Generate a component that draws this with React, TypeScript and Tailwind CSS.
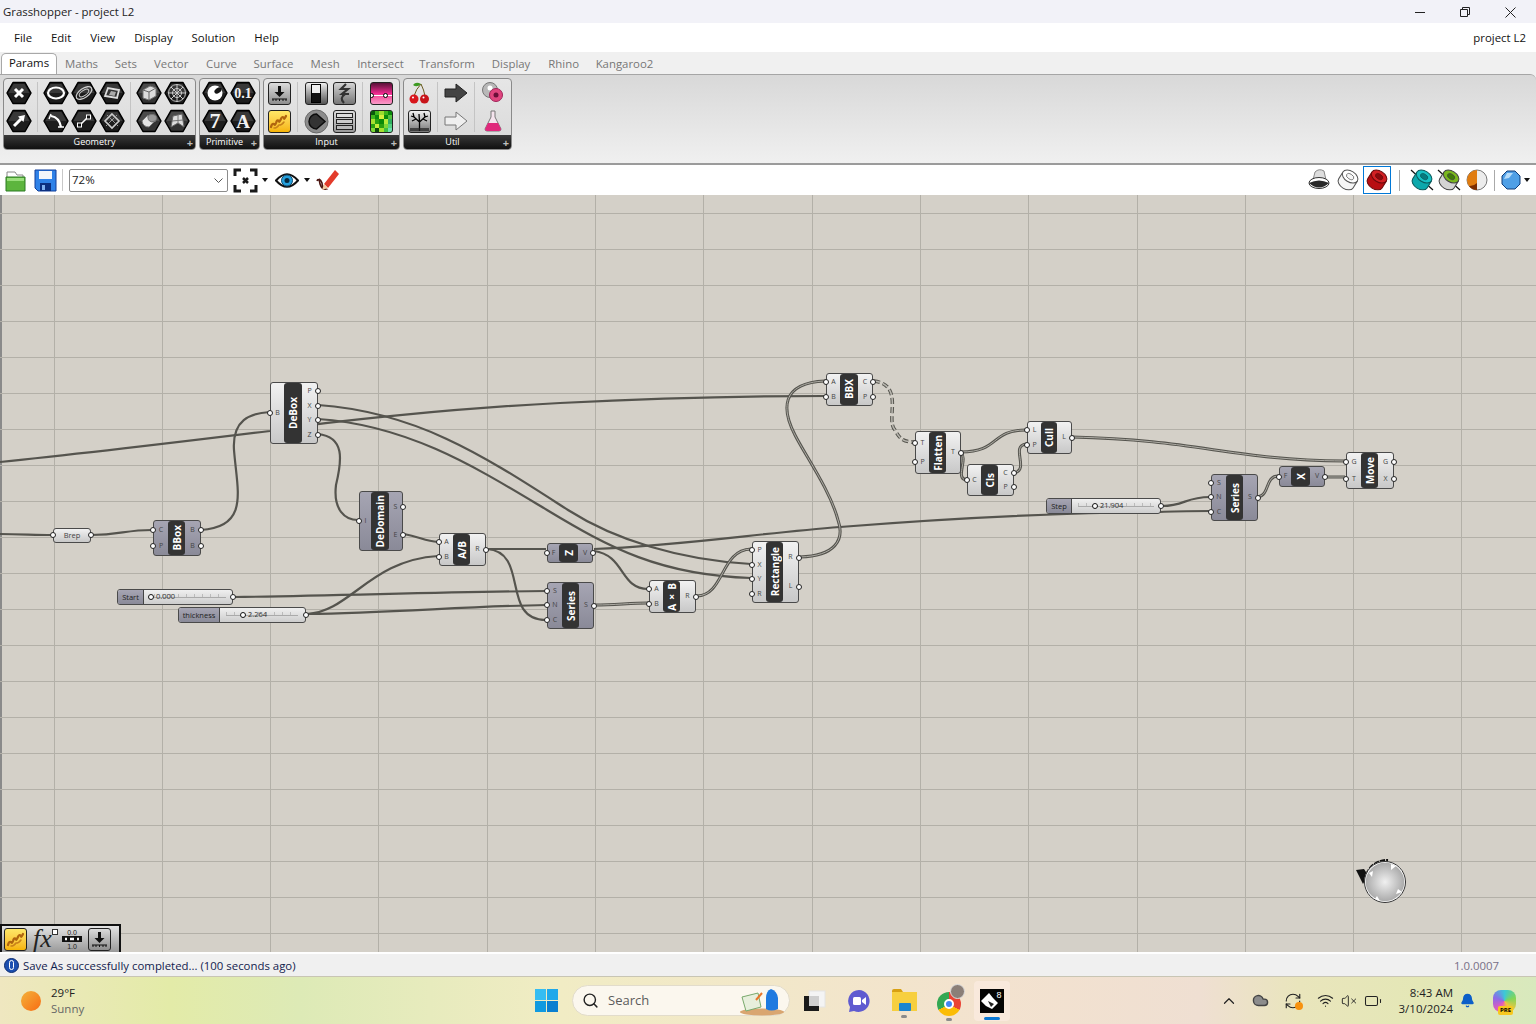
import React from 'react'
import { Battery, Bell, ChevronUp, Cloud, RefreshCw, Search, VolumeX, Wifi } from 'lucide-react'

const ui = "font-['Open_Sans','Noto_Sans',sans-serif]"

/* ---------- ribbon icons ---------- */
const Hex = ({ children, light }: { children?: React.ReactNode; light?: boolean }) => (
  <svg width="28" height="28" viewBox="0 0 28 28">
    <polygon points="2,14 8,3.5 20,3.5 26,14 20,24.5 8,24.5" fill={light ? '#333' : '#1d1d1d'} stroke="#000" strokeLinejoin="round" strokeWidth="1.5" />
    <polygon points="3.5,14 8.6,5 19.4,5 24.5,14" fill="#fff" opacity="0.12" />
    {children}
  </svg>
)

const Sq = ({ children, cls }: { children?: React.ReactNode; cls: string }) => (
  <div className={`w-[23px] h-[23px] rounded-[3px] border border-[#222] overflow-hidden flex items-center justify-center ${cls}`}>
    {children}
  </div>
)

const white = { stroke: '#fff', fill: 'none' }

const geometryIcons = [
  [
    <Hex><path d="M10 10 L18 18 M18 10 L10 18" {...white} strokeWidth="3" /></Hex>,
    <Hex><path d="M9 19 L16 12" {...white} strokeWidth="3" /><polygon points="20,8 13,9.5 18.5,15" fill="#fff" /></Hex>,
  ],
  [
    <Hex><ellipse cx="14" cy="14" rx="8" ry="5.5" {...white} strokeWidth="2.2" /></Hex>,
    <Hex><path d="M9 9 C15 10 18 14 19 20" {...white} strokeWidth="2.2" /><path d="M7 12 L9 7 M16 20h6" stroke="#fff" strokeWidth="1.4" /></Hex>,
  ],
  [
    <Hex><ellipse cx="14" cy="14" rx="9" ry="4.5" transform="rotate(-35 14 14)" fill="none" stroke="#ccc" strokeWidth="1.3" /><ellipse cx="14" cy="14" rx="5.500" ry="2.500" transform="rotate(-35 14 14)" fill="none" stroke="#ccc" /></Hex>,
    <Hex><path d="M10 18 L18 10" stroke="#fff" strokeWidth="1.6" /><rect x="7.5" y="16" width="4" height="4" fill="#111" stroke="#fff" /><rect x="16.5" y="8" width="4" height="4" fill="#111" stroke="#fff" /></Hex>,
  ],
  [
    <Hex><polygon points="7,17 10,9 21,11 19,19" fill="#333" stroke="#ddd" strokeWidth="1.8" /><polygon points="11,16 13,12 18,13 16.500,17" fill="#aaa" /></Hex>,
    <Hex><polygon points="14,7 21,14 14,21 7,14" fill="none" stroke="#ccc" strokeWidth="1.6" /><path d="M9 8 L20 19 M19 8 L8 19" stroke="#999" /></Hex>,
  ],
  [
    <Hex light><polygon points="8,11 15,7 21,9 21,17 14,21 8,19" fill="#dcdcdc" stroke="#777" /><path d="M8 11 L14 13 L14 21 M14 13 L21 9" stroke="#666" fill="none" /></Hex>,
    <Hex light><ellipse cx="17" cy="11" rx="4.500" ry="3.500" fill="#999" stroke="#777" /><path d="M13 8 L7 14 Q8 20 14 20 L21 13 Q21 15 17 15 Q12 14 13 8z" fill="#e4e4e4" stroke="#777" /></Hex>,
  ],
  [
    <Hex><circle cx="14" cy="14" r="8.500" fill="none" stroke="#bbb" /><path d="M14 5v18M5 14h18M8 8l12 12M20 8L8 20" stroke="#ccc" /><circle cx="14" cy="14" r="4.500" fill="none" stroke="#ccc" /></Hex>,
    <Hex light><polygon points="8,20 10,9 19,7 21,20 15,16" fill="#ddd" stroke="#666" /><path d="M15 8 L15 16 M9 14 L20 13" stroke="#777" /></Hex>,
  ],
]

const txt = (t: string, size: number, y = 19) => (
  <text x="14" y={y} textAnchor="middle" fontSize={size} fontWeight="700" fill="#f2f2f2" fontFamily="Liberation Serif, serif">{t}</text>
)

const primitiveIcons = [
  [
    <Hex><circle cx="14" cy="14" r="7.500" fill="#fff" /><ellipse cx="17" cy="11.500" rx="4" ry="2.500" transform="rotate(-35 17 11.500)" fill="#151515" /></Hex>,
    <Hex>{txt('7', 22, 21)}</Hex>,
  ],
  [<Hex>{txt('0.1', 14, 19)}</Hex>, <Hex>{txt('A', 19, 20.500)}</Hex>],
]

const Download = () => (
  <svg width="17" height="17" viewBox="0 0 17 17">
    <path d="M8.500 1v7" stroke="#111" strokeWidth="3" />
    <polygon points="3.500,7 13.500,7 8.500,12" fill="#111" />
    <path d="M1 14h15M2 14v2M5 14v2M8.500 14v2M12 14v2M15 14v2" stroke="#111" />
  </svg>
)

const Wave = () => (
  <svg width="20" height="20" viewBox="0 0 20 20">
    <path d="M2 16 Q3 12 5 13 Q6 15 7 12 Q8 8 10 10 Q10 12 12 8 Q13 5 15 7 Q15 9 17 5" fill="none" stroke="#b0650f" strokeWidth="2.300" strokeLinecap="round" />
    <path d="M5 17 Q8 17 10 14 Q13 14 15 11" fill="none" stroke="#c9821a" strokeWidth="1.500" strokeLinecap="round" />
  </svg>
)

const checkerRows = [
  ['#0a5c0a', '#3fb51c', '#9ddc2e', '#3fb51c', '#0a8a0a'],
  ['#3fb51c', '#0a8a0a', '#d4ee3c', '#0a8a0a', '#55c040'],
  ['#a6e030', '#2aa010', '#0a8a0a', '#b6ec3c', '#30b060'],
  ['#2aa010', '#c6ec3c', '#2aa010', '#7ed838', '#55d080'],
  ['#7ed838', '#0a4a0a', '#a6e030', '#3ec040', '#70e0b0'],
]

const Checker = () => (
  <svg width="23" height="23" viewBox="0 0 5 5" shapeRendering="crispEdges">
    {checkerRows.map((row, y) => row.map((c, x) => <rect key={`${x}-${y}`} x={x} y={y} width="1" height="1" fill={c} />))}
  </svg>
)

const inputIcons = [
  [
    <Sq cls="bg-linear-to-b from-[#dcdcdc] to-[#8e8e8e]"><Download /></Sq>,
    <Sq cls="bg-linear-to-b from-[#ffe766] to-[#f6b400] border-[#8a7a30]"><Wave /></Sq>,
  ],
  [
    <Sq cls="bg-linear-to-b from-[#f0f0f0] to-[#555]"><div className="w-[10px] h-[19px] border border-black bg-linear-to-b from-[#eee] from-45% to-[#111] to-45%" /></Sq>,
    <svg width="25" height="25" viewBox="0 0 25 25">
      <circle cx="12.500" cy="12.500" r="11.500" fill="#8c8c8c" stroke="#6a6a6a" />
      <path d="M12.500 5 A7.500 7.500 0 1 0 12.500 20 L21 12.500z" fill="#333" stroke="#0c0c0c" strokeWidth="1.500" />
    </svg>,
  ],
  [
    <Sq cls="bg-linear-to-b from-[#d4d4d4] to-[#777]">
      <svg width="17" height="21" viewBox="0 0 17 21"><path d="M10 1 L5 6 L12 6 L6 11 L13 11 M9 11 Q3 15 8 20" fill="none" stroke="#333" strokeWidth="2.200" /></svg>
    </Sq>,
    <Sq cls="bg-linear-to-b from-[#ddd] to-[#999] flex-col gap-[1px]">
      <div className="w-[17px] h-[5px] bg-[#ddd] border border-[#222]" />
      <div className="w-[17px] h-[5px] bg-[#ccc] border border-[#222]" />
      <div className="w-[17px] h-[5px] bg-[#bbb] border border-[#222]" />
    </Sq>,
  ],
  [
    <Sq cls="bg-linear-to-b from-[#5a1038] via-[#f02a90] to-[#f99ac8] relative">
      <div className="absolute left-0 right-0 top-[12px] h-px bg-white" />
      <span className="absolute left-[-2px] top-[10px] w-[5px] h-[5px] rounded-full bg-white border border-black" />
      <span className="absolute right-[4px] top-[10px] w-[5px] h-[5px] rounded-full bg-white border border-black" />
    </Sq>,
    <Sq cls="bg-[#0a8a0a]"><Checker /></Sq>,
  ],
]

const utilIcons = [
  [
    <svg width="22" height="24" viewBox="0 0 22 24">
      <path d="M6 15 Q8 8 13 3 Q16 9 17 15" fill="none" stroke="#6a5a20" />
      <path d="M13 3 Q8 0 5 4 Q9 7 13 3" fill="#3e9a22" />
      <circle cx="6" cy="18" r="4.500" fill="#d8161c" />
      <circle cx="16.500" cy="18" r="4.500" fill="#c8141a" />
      <circle cx="5" cy="16.500" r="1" fill="#fff" />
      <circle cx="15.500" cy="16.500" r="1" fill="#fff" />
    </svg>,
    <Sq cls="bg-linear-to-b from-[#f2f2f2] to-[#777]">
      <svg width="21" height="21" viewBox="0 0 21 21">
        <path d="M10.500 20 L10.500 11 M10.500 11 L5 6 M10.500 11 L16 6 M5 6 L2 5 M5 6 L4 2 M16 6 L19 5 M16 6 L15 2 M10.500 11 L10 3 M3 10 L7 8 M18 10 L14 8" stroke="#000" strokeWidth="1.300" fill="none" />
        <rect x="1" y="17" width="19" height="3" fill="#222" opacity="0.7" />
      </svg>
    </Sq>,
  ],
  [
    <svg width="24" height="20" viewBox="0 0 24 20"><polygon points="1,6 12,6 12,1 23,10 12,19 12,14 1,14" fill="#444" stroke="#222" /></svg>,
    <svg width="24" height="20" viewBox="0 0 24 20"><polygon points="1,6 12,6 12,1 23,10 12,19 12,14 1,14" fill="#efefef" stroke="#777" /></svg>,
  ],
  [
    <svg width="24" height="24" viewBox="0 0 24 24">
      <circle cx="9" cy="9" r="7.500" fill="#b8b8b8" stroke="#777" />
      <circle cx="9" cy="7" r="2.500" fill="#fff" />
      <circle cx="15" cy="14" r="6.500" fill="#e0457e" stroke="#a02458" />
      <circle cx="15" cy="14" r="2.500" fill="#6a0f38" />
    </svg>,
    <svg width="20" height="24" viewBox="0 0 20 24">
      <path d="M8 2h4v6l6 12q0 2-2 2H4q-2 0-2-2l6-12z" fill="#f5e4ee" stroke="#777" />
      <path d="M5 14h10l3 6q0 2-2 2H4q-2 0-2-2z" fill="#e0287c" />
    </svg>,
  ],
]

const Group = ({ label, sections, cls }: { label: string; sections: React.ReactNode[][][]; cls: string }) => (
  <div className={`h-[72px] flex flex-col rounded-[4px] border border-[#8a8a8a] overflow-hidden bg-linear-to-b from-[#e6e6e6] to-[#d9d9d9] ${cls}`}>
    <div className="flex-1 flex px-[1px]">
      {sections.map((cols, s) => (
        <React.Fragment key={s}>
          {s > 0 && <div className="w-[1px] mx-[4px] my-[3px] bg-[#c4c4c4]" />}
          {cols.map((col, c) => (
            <div key={c} className="w-[28px] flex flex-col">
              {col.map((ic, r) => (
                <div key={r} className="h-[28px] flex items-center justify-center">{ic}</div>
              ))}
            </div>
          ))}
        </React.Fragment>
      ))}
    </div>
    <div className={`relative h-[14px] pr-[10px] bg-linear-to-b from-[#3a3a3a] to-[#111] text-white text-[9px] leading-[13px] text-center ${ui}`}>
      {label}
      <span className="absolute right-[2px] top-[1px] text-[#bdbdbd] text-[11px] leading-[13px] font-bold">+</span>
    </div>
  </div>
)

/* ---------- canvas ---------- */
type NodeProps = {
  pos: string
  title: string
  kind?: 'light' | 'gray'
  left: string[]
  right: string[]
  leftW?: string
  midW?: string
}

const Ports = ({ items, side, cls }: { items: string[]; side: 'l' | 'r'; cls: string }) => (
  <div className={`flex flex-col py-[1px] ${cls}`}>
    {items.map((t, i) => (
      <div key={i} className="relative flex-1 flex items-center justify-center text-[7px] text-[#444]">
        {t}
        <span className={`absolute w-[6px] h-[6px] rounded-full bg-white border-[1.5px] border-[#222] ${side === 'l' ? 'left-[-4px]' : 'right-[-4px]'} top-1/2 -translate-y-1/2`} />
      </div>
    ))}
  </div>
)

const Node = ({ pos, title, kind = 'light', left, right, leftW = 'w-[13px]', midW = 'w-[18px]' }: NodeProps) => (
  <div className={`absolute flex rounded-[3px] border border-[#4a4a4a] ${kind === 'light' ? 'bg-linear-to-b from-[#f2f2f2] to-[#c8c8c8]' : 'bg-linear-to-b from-[#a6a5b3] to-[#8a8a98]'} ${pos} ${ui}`}>
    <Ports items={left} side="l" cls={leftW} />
    <div className={`${midW} rounded-[3px] bg-[#333333] flex items-center justify-center overflow-hidden`}>
      <span className="[writing-mode:vertical-rl] rotate-180 text-white text-[10px] font-bold leading-none whitespace-nowrap">{title}</span>
    </div>
    <Ports items={right} side="r" cls="flex-1" />
  </div>
)

const Slider = ({ pos, label, labelW, value, knob, tick }: { pos: string; label: string; labelW: string; value: string; knob: string; tick: string }) => (
  <div className={`absolute flex rounded-[3px] border border-[#4a4a4a] bg-linear-to-b from-[#f0f0f0] to-[#cdcdcd] ${pos} ${ui}`}>
    <div className={`${labelW} bg-linear-to-b from-[#a6a5b3] to-[#8a8a98] border-r border-[#444] rounded-l-[2px] text-[7.500px] leading-[14px] text-center text-[#222]`}>{label}</div>
    <div className="relative flex-1">
      <div className={`absolute top-[4px] h-[4px] border-b border-[#aaa] bg-[repeating-linear-gradient(90deg,#bbb_0px,#bbb_1px,transparent_1px,transparent_8px)] ${tick}`} />
      <div className={`absolute top-[1px] flex items-center gap-[2px] ${knob}`}>
        <span className="w-[6px] h-[6px] rounded-full bg-white border-[1.5px] border-[#111]" />
        <span className="text-[7.500px] leading-[11px] text-[#333]">{value}</span>
      </div>
      <span className="absolute right-[-4px] top-1/2 -translate-y-1/2 w-[6px] h-[6px] rounded-full bg-white border-[1.5px] border-[#222]" />
    </div>
  </div>
)

const single = [
  'M0 462 C90 453 180 442 270 431 C330 421 460 408 560 403 C660 398 740 396 826 396',
  'M0 534 C20 534 35 535 52 535',
  'M91 535 C120 535 125 530 152 530',
  'M201 530 C250 527 237 490 234 450 C232 420 250 413 270 412',
  'M318 434 C345 437 342 460 336 485 C333 510 345 520 358 520',
  'M318 405 C420 412 490 460 568 510 C615 540 680 560 751 564',
  'M318 419 C410 425 480 470 547 510 C610 548 660 575 751 578',
  'M404 534 C420 537 425 541 438 542',
  'M307 614 C350 612 370 560 438 556',
  'M487 549 C510 549 530 549 546 549',
  'M487 549 C530 552 500 620 546 620',
  'M234 597 C330 596 440 592 546 591',
  'M307 614 C390 613 470 606 546 605',
  'M594 551 C625 555 620 589 648 589',
  'M594 549 C680 546 760 533 840 527 C950 518 1050 513 1160 512 C1175 511 1195 511 1210 511',
  'M1162 506 C1185 506 1185 497 1210 497',
]

const double = [
  'M595 605 C615 605 630 603 648 603',
  'M697 596 C725 595 720 550 751 549',
  'M800 557 C835 556 845 540 838 520 C830 490 805 455 795 435 C782 410 780 383 825 381',
  'M961 452 C1000 452 990 430 1026 430',
  'M961 452 C968 460 955 478 966 480',
  'M1014 473 C1030 470 1010 446 1026 444',
  'M1072 437 C1200 440 1230 460 1345 461',
  'M1258 497 C1270 495 1265 476 1278 476',
  'M1325 477 L1345 477',
]

const CanvasDrawing = () => {
  const vx = Array.from({ length: 14 }).map((_, i) => Math.round(53.5 + i * 108.3) + 0.5)
  const hy = Array.from({ length: 21 }).map((_, i) => 213.5 + i * 36)
  return (
    <svg className="absolute inset-0 w-full h-full" viewBox="0 195 1536 757">
      {vx.map((x) => <path key={x} d={`M${x} 195V952`} stroke="#b3b0a8" />)}
      {hy.map((y) => <path key={y} d={`M0 ${y}H1536`} stroke="#b3b0a8" />)}
      {single.map((d, i) => <path key={i} d={d} fill="none" stroke="#55544e" strokeWidth="2.200" />)}
      {double.map((d, i) => (
        <g key={i}>
          <path d={d} fill="none" stroke="#55544e" strokeWidth="3" />
          <path d={d} fill="none" stroke="#aeaca5" strokeWidth="1" />
        </g>
      ))}
      <path d="M874 381 C905 385 885 420 895 430 C900 440 905 442 914 442" fill="none" stroke="#55544e" strokeWidth="3.500" strokeDasharray="6 3" />
      <path d="M874 381 C905 385 885 420 895 430 C900 440 905 442 914 442" fill="none" stroke="#b9b7b0" strokeWidth="1.500" strokeDasharray="6 3" />
    </svg>
  )
}

const Radial = () => (
  <svg className="absolute left-[1352px] top-[661px]" width="58" height="50" viewBox="1352 856 58 50">
    <defs>
      <radialGradient id="rad">
        <stop offset="0" stopColor="#f0f0f0" />
        <stop offset="1" stopColor="#a8a8a8" />
      </radialGradient>
    </defs>
    <polygon points="1356,870 1364,869 1368,875 1363,884" fill="#111" />
    <path d="M1366 880 A21 21 0 0 1 1388 861" fill="none" stroke="#111" strokeWidth="4" strokeDasharray="5 1" />
    <circle cx="1385" cy="882" r="20" fill="url(#rad)" stroke="#fff" strokeWidth="1.500" />
    <circle cx="1385" cy="882" r="20.500" fill="none" stroke="#333" />
    <polygon points="1369,873 1373,871 1372,877" fill="#fff" />
    <polygon points="1391,864 1396,866 1391,870" fill="#fff" />
    <polygon points="1398,889 1402,892 1396,894" fill="#fff" />
    <polygon points="1377,896 1380,901 1375,899" fill="#fff" />
  </svg>
)

/* ---------- toolbar icons ---------- */
const Tube = ({ body, top, hole, ring = '#222', size = 24, slash }: { body: string; top: string; hole?: string; ring?: string; size?: number; slash?: boolean }) => (
  <svg width={size} height={size} viewBox="0 0 24 24">
    {slash && <path d="M1 2 L23 22" stroke="#111" strokeWidth="1.200" />}
    <g transform="rotate(32 12 12)">
      <path d="M3.500 8 V16 A8.500 5.500 0 0 0 20.500 16 V8" fill={body} stroke={ring} />
      <ellipse cx="12" cy="8" rx="8.500" ry="5.500" fill={top} stroke={ring} />
      <ellipse cx="12" cy="8" rx="4" ry="2.500" fill={hole ?? body} stroke={ring} strokeWidth="0.700" />
    </g>
  </svg>
)

const Toolbar = () => (
  <div className="h-[32px] flex items-center bg-white border-t-2 border-[#9b9b9b] pl-[5px]">
    <svg width="21" height="23" viewBox="0 0 21 23">
      <path d="M2 3h8l2 3h6v3H2z" fill="#fff" stroke="#888" />
      <path d="M1 8h19v14H1z" fill="#5db53e" stroke="#2d7a22" />
      <path d="M2 9h17v3H2z" fill="#9adf7c" />
    </svg>
    <svg className="ml-[8px]" width="23" height="23" viewBox="0 0 23 23">
      <path d="M1 1h21v21H4l-3-3z" fill="#2f82e8" stroke="#123f9a" />
      <rect x="5" y="2" width="13" height="8" fill="#f2f6fb" />
      <rect x="6" y="14" width="11" height="8" fill="#0c2f80" />
      <rect x="8" y="16" width="3" height="5" fill="#7fb0f0" />
    </svg>
    <div className="w-px h-[22px] bg-[#c8c8c8] ml-[5px]" />
    <div className={`ml-[6px] w-[159px] h-[23px] border border-[#8c8c8c] rounded-[2px] bg-white flex items-center justify-between pl-[2px] pr-[4px] text-[11.500px] text-[#222] ${ui}`}>
      72%
      <svg width="9" height="5" viewBox="0 0 9 5"><path d="M0.500 0.500 L4.500 4.500 L8.500 0.500" fill="none" stroke="#555" /></svg>
    </div>
    <svg className="ml-[5px]" width="25" height="25" viewBox="0 0 25 25">
      <path d="M2 8V2h6M17 2h6v6M23 17v6h-6M8 23H2v-6" fill="none" stroke="#1a1a1a" strokeWidth="3" />
      <path d="M10 10l5 5M15 10l-5 5" stroke="#1a1a1a" strokeWidth="2.500" />
    </svg>
    <svg className="ml-[4px]" width="6" height="4" viewBox="0 0 6 4"><polygon points="0,0 6,0 3,4" fill="#111" /></svg>
    <svg className="ml-[7px]" width="24" height="17" viewBox="0 0 24 17">
      <path d="M1 8.500 Q12 -4 23 8.500 Q12 21 1 8.500z" fill="#fff" stroke="#111" strokeWidth="2" />
      <circle cx="12" cy="8.500" r="5.500" fill="#25a0dc" stroke="#0a4a70" />
      <circle cx="12" cy="8.500" r="2.500" fill="#072a40" />
    </svg>
    <svg className="ml-[5px]" width="6" height="4" viewBox="0 0 6 4"><polygon points="0,0 6,0 3,4" fill="#111" /></svg>
    <svg className="ml-[6px]" width="24" height="24" viewBox="0 0 24 24">
      <path d="M1 13 Q3 9 4 16 Q6 22 10 21 Q6 19 6 15 Q5 12 3 11" fill="none" stroke="#4a1410" strokeWidth="1.600" />
      <path d="M8 16 L19 2 L23 6 L12 20z" fill="#e33b2b" />
      <path d="M6 22 L8 16 L12 20z" fill="#f2c9a0" />
    </svg>

    <div className="ml-auto flex items-center">
      <svg width="22" height="24" viewBox="0 0 22 24">
        <path d="M5 12 L7 4 Q11 0 16 3 L18 12z" fill="#ddd" stroke="#888" />
        <ellipse cx="11" cy="15" rx="10" ry="5.500" fill="#fff" stroke="#333" />
        <path d="M1 15 Q11 10 21 15 Q11 24 1 15z" fill="#2a2a2a" />
      </svg>
      <div className="ml-[6px]"><Tube body="#f6f6f6" top="#ffffff" ring="#555" /></div>
      <div className="ml-[3px] w-[28px] h-[28px] border border-[#0078d7] flex items-center justify-center">
        <Tube body="#b80e12" top="#d22024" hole="#8a0a0e" ring="#6a0a0c" />
      </div>
      <div className="w-px h-[21px] bg-[#aaa] ml-[8px] mr-[10px]" />
      <Tube body="#0ca8ac" top="#18c0c4" hole="#067a7e" ring="#0a5a5c" slash />
      <div className="ml-[3px]"><Tube body="#d4d4d4" top="#7ab81e" hole="#3e7a08" ring="#444" slash /></div>
      <svg className="ml-[5px]" width="22" height="22" viewBox="0 0 22 22">
        <circle cx="11" cy="11" r="10" fill="#ececec" stroke="#777" />
        <path d="M11 1 A10 10 0 0 0 11 21z" fill="#e07c10" />
        <path d="M11 14 A10 10 0 0 1 3 17 A10 10 0 0 0 11 21z" fill="#7a2c00" />
      </svg>
      <div className="w-px h-[21px] bg-[#aaa] mx-[6px]" />
      <svg width="20" height="20" viewBox="0 0 20 20">
        <polygon points="6,1 14,1 19,6 19,14 14,19 6,19 1,14 1,6" fill="#4f9fe6" stroke="#123c78" />
        <polygon points="6,3 12,3 8,8 3,9" fill="#b7dcfa" />
      </svg>
      <svg className="ml-[3px] mr-[6px]" width="6" height="4" viewBox="0 0 6 4"><polygon points="0,0 6,0 3,4" fill="#111" /></svg>
    </div>
  </div>
)

const tabs = [
  ['Maths', 'ml-[8px]'],
  ['Sets', 'ml-[16.700px]'],
  ['Vector', 'ml-[17.200px]'],
  ['Curve', 'ml-[17.800px]'],
  ['Surface', 'ml-[16.600px]'],
  ['Mesh', 'ml-[17.100px]'],
  ['Intersect', 'ml-[17.500px]'],
  ['Transform', 'ml-[15.500px]'],
  ['Display', 'ml-[17px]'],
  ['Rhino', 'ml-[18px]'],
  ['Kangaroo2', 'ml-[16.600px]'],
]

/* ---------- taskbar ---------- */
const Taskbar = () => (
  <div className={`h-[48px] flex items-center border-t border-[#c8c5b4] bg-[linear-gradient(90deg,#efe7c0_0px,#e3eba8_170px,#ddeab6_300px,#f1ecc4_560px,#f3e2cf_1000px,#efdfd2_1200px,#e9e5bc_1300px,#e4e7b6_1420px,#d8e9bd_1536px)] ${ui}`}>
    <div className="w-[535px] flex items-center pl-[21px]">
      <div className="w-[20px] h-[20px] rounded-full bg-linear-to-br from-[#f2b13a] to-[#f76a10]" />
      <div className="ml-[10px] text-[11.500px] leading-[16px]">
        <div className="text-[#222]">29°F</div>
        <div className="text-[#666]">Sunny</div>
      </div>
    </div>
    <svg width="23" height="23" viewBox="0 0 23 23">
      <rect x="0" y="0" width="11" height="11" fill="#35bdf2" />
      <rect x="12" y="0" width="11" height="11" fill="#1fa8ea" />
      <rect x="0" y="12" width="11" height="11" fill="#109ae0" />
      <rect x="12" y="12" width="11" height="11" fill="#0a7fd0" />
    </svg>
    <div className="ml-[14px] w-[218px] h-[31px] rounded-full bg-[#fbf7ee] border border-[#e2dccb] flex items-center pl-[9px] relative">
      <Search size={17} strokeWidth={2} color="#222" />
      <span className="ml-[9px] text-[13px] text-[#5c5c5c]">Search</span>
      <svg className="absolute right-[5px] top-[2px]" width="46" height="28" viewBox="0 0 46 28">
        <ellipse cx="24" cy="24" rx="22" ry="3.500" fill="#d9a670" />
        <polygon points="4,9 20,5 23,19 8,23" fill="#e7efdc" stroke="#79a96c" />
        <path d="M18 12 L24 5" stroke="#e8762a" strokeWidth="2" />
        <path d="M33 1 Q39 3 40 10 V21 Q33 24 28 21 V10 Q28 3 33 1z" fill="#1f7ae0" />
      </svg>
    </div>
    <svg className="ml-[12px]" width="24" height="24" viewBox="0 0 24 24">
      <rect x="7" y="2" width="16" height="16" fill="#f4f4f4" stroke="#e4e4e4" />
      <rect x="2" y="7" width="15" height="15" fill="#1a1a1a" />
      <rect x="7" y="7" width="10" height="10" fill="#cfcfcf" />
    </svg>
    <svg className="ml-[21px]" width="24" height="24" viewBox="0 0 24 24">
      <path d="M12 1 A11 11 0 1 1 7 22 L2 23 L3 18 A11 11 0 0 1 12 1z" fill="#5f5bd0" />
      <rect x="6" y="8" width="8" height="8" rx="1.500" fill="#fff" />
      <polygon points="15,11 19,8 19,16 15,13" fill="#fff" />
    </svg>
    <div className="relative ml-[21px] w-[26px] h-[24px]">
      <svg width="25" height="22" viewBox="0 0 25 22">
        <path d="M0 2 Q0 0 2 0 H9 L11 3 H0z" fill="#d8a012" />
        <rect x="0" y="3" width="25" height="19" fill="#f7cf3f" />
        <rect x="7" y="14" width="12" height="8" rx="1" fill="#1c85d0" />
      </svg>
      <span className="absolute left-[9px] top-[26px] w-[6px] h-[3px] rounded-full bg-[#8b8b8b]" />
    </div>
    <div className="relative ml-[19px] w-[28px] h-[26px]">
      <div className="absolute left-0 top-[4px] w-[24px] h-[24px] rounded-full bg-[conic-gradient(#ea4335_0deg_120deg,#fbbc05_120deg_240deg,#34a853_240deg_360deg)] flex items-center justify-center">
        <div className="w-[10px] h-[10px] rounded-full bg-[#4285f4] border-2 border-white" />
      </div>
      <div className="absolute left-[13px] top-[-4px] w-[15px] h-[15px] rounded-full bg-[#8b7f78] border border-[#ddd]" />
      <span className="absolute left-[9px] top-[30px] w-[6px] h-[3px] rounded-full bg-[#8b8b8b]" />
    </div>
    <div className="relative ml-[9px] w-[36px] h-[40px] rounded-[4px] bg-[#f9e9dc] flex items-center justify-center">
      <svg width="24" height="24" viewBox="0 0 24 24">
        <rect width="24" height="24" fill="#050505" />
        <path d="M1 12 L9 4 L13 9 L18 14 L12 20 L6 17z" fill="#fff" />
        <path d="M8 12 L14 15 L11 18z" fill="#222" />
        <text x="19" y="9" fontSize="9" fill="#fff" textAnchor="middle" fontFamily="Liberation Sans, sans-serif">8</text>
      </svg>
      <span className="absolute left-[10px] bottom-[1px] w-[16px] h-[3px] rounded-full bg-[#0a78d4]" />
    </div>
    <div className="ml-auto flex items-center text-[#222]">
      <ChevronUp size={18} strokeWidth={1.6} />
      <Cloud className="ml-[14px]" size={17} fill="#8c8c8c" color="#444" />
      <div className="relative ml-[15px]">
        <RefreshCw size={18} strokeWidth={1.5} />
        <span className="absolute right-[-1px] bottom-0 w-[8px] h-[8px] rounded-full bg-[#f7920f]" />
      </div>
      <Wifi className="ml-[15px]" size={17} strokeWidth={1.6} />
      <VolumeX className="ml-[7px]" size={16} strokeWidth={1.4} />
      <Battery className="ml-[7px]" size={18} strokeWidth={1.4} />
      <div className="ml-[17px] text-[11.500px] leading-[16px] text-right text-[#222]">
        <div>8:43 AM</div>
        <div>3/10/2024</div>
      </div>
      <Bell className="ml-[7px]" size={15} fill="#0c5fc8" color="#0c5fc8" />
      <div className="relative ml-[18px] mr-[20px] w-[23px] h-[22px] rounded-[8px] bg-[conic-gradient(#3cc8d8,#7fd65a,#f5c63c,#e85ab8,#8b6be8,#3cc8d8)]">
        <span className="absolute left-[5px] bottom-[-3px] px-[2px] h-[9px] rounded-[2px] bg-[#f7c81e] text-[6px] leading-[9px] font-bold text-black">PRE</span>
      </div>
    </div>
  </div>
)

const App = () => {
  return (
    <div className={`w-[1536px] h-[1024px] flex flex-col overflow-hidden bg-[#f0f0f0] ${ui}`}>
      {/* TITLE */}
      <div className="h-[23px] flex items-center justify-between bg-[#f2f2f8] pl-[3px] pt-[1px] text-[11.400px] text-[#222]">
        <span>Grasshopper - project L2</span>
        <div className="flex items-center pr-[20px] gap-[35px]">
          <svg width="10" height="10" viewBox="0 0 10 10"><path d="M0 5.500H10" stroke="#222" /></svg>
          <svg width="10" height="10" viewBox="0 0 10 10"><path d="M0.500 2.500h7v7h-7z M2.500 2.500V0.500h7v7H7.500" fill="none" stroke="#222" /></svg>
          <svg width="11" height="11" viewBox="0 0 11 11"><path d="M0.500 0.500L10.500 10.500M10.500 0.500L0.500 10.500" stroke="#222" /></svg>
        </div>
      </div>
      {/* MENU */}
      <div className="h-[29px] flex items-center bg-white pl-[14px] pr-[10px] pt-[1px] text-[11.400px] text-[#111] gap-[19px]">
        {['File', 'Edit', 'View', 'Display', 'Solution', 'Help'].map((m) => <span key={m}>{m}</span>)}
        <span className="ml-auto">project L2</span>
      </div>
      {/* TABS */}
      <div className="h-[22px] flex items-end pl-[1px] text-[11.400px] text-[#777] bg-[#f0f0f0]">
        <div className="w-[56px] h-[21px] rounded-t-[5px] border border-b-0 border-[#a8a8a8] bg-white text-center leading-[17px] text-[#111]">Params</div>
        {tabs.map(([t, m]) => <span key={t} className={`${m} leading-[20px]`}>{t}</span>)}
      </div>
      {/* RIBBON */}
      <div className="h-[89px] pt-[3px] pl-[3px] flex gap-[3px] items-start rounded-tr-[6px] border-t border-[#a5a5a5] bg-linear-to-b from-[#d8d8d8] to-[#f0f0f0]">
        <Group label="Geometry" cls="w-[193px]" sections={[[[geometryIcons[0][0], geometryIcons[0][1]]], [geometryIcons[1], geometryIcons[2], geometryIcons[3]], [geometryIcons[4], geometryIcons[5]]]} />
        <Group label="Primitive" cls="w-[61px]" sections={[[primitiveIcons[0], primitiveIcons[1]]]} />
        <Group label="Input" cls="w-[137px]" sections={[[inputIcons[0]], [inputIcons[1], inputIcons[2]], [inputIcons[3]]]} />
        <Group label="Util" cls="w-[109px]" sections={[[utilIcons[0]], [utilIcons[1]], [utilIcons[2]]]} />
      </div>
      <Toolbar />
      {/* CANVAS */}
      <div className="relative h-[757px] bg-[#d4d0c8] border-l-2 border-[#8a8a8a]">
        <div className="absolute left-[-2px] top-0 w-[1536px] h-[757px]">
          <CanvasDrawing />
          <Node pos="left-[270px] top-[187px] w-[48px] h-[62px]" title="DeBox" left={['B']} right={['P', 'X', 'Y', 'Z']} />
          <Node pos="left-[153px] top-[325px] w-[48px] h-[36px]" title="BBox" kind="gray" left={['C', 'P']} right={['B', 'B']} leftW="w-[14px]" midW="w-[17px]" />
          <div className="absolute left-[53px] top-[333px] w-[38px] h-[15px] rounded-[3px] border border-[#4a4a4a] bg-linear-to-b from-[#f2f2f2] to-[#c8c8c8] text-[7.500px] leading-[13px] text-center text-[#444]">
            Brep
            <span className="absolute left-[-4px] top-[3px] w-[6px] h-[6px] rounded-full bg-white border-[1.5px] border-[#222]" />
            <span className="absolute right-[-4px] top-[3px] w-[6px] h-[6px] rounded-full bg-white border-[1.5px] border-[#222]" />
          </div>
          <Slider pos="left-[117px] top-[394px] w-[116px] h-[16px]" label="Start" labelW="w-[26px]" value="0.000" knob="left-[4px]" tick="left-[10px] right-[6px]" />
          <Slider pos="left-[178px] top-[412px] w-[128px] h-[16px]" label="thickness" labelW="w-[41px]" value="2.264" knob="left-[20px]" tick="left-[6px] right-[7px]" />
          <Slider pos="left-[1046px] top-[303px] w-[115px] h-[16px]" label="Step" labelW="w-[25px]" value="21.904" knob="left-[20px]" tick="left-[6px] right-[6px]" />
          <Node pos="left-[359px] top-[296px] w-[44px] h-[60px]" title="DeDomain" kind="gray" left={['I']} right={['S', 'E']} leftW="w-[11px]" />
          <Node pos="left-[439px] top-[338px] w-[47px] h-[33px]" title="A/B" left={['A', 'B']} right={['R']} leftW="w-[13px]" midW="w-[17px]" />
          <Node pos="left-[547px] top-[348px] w-[46px] h-[20px]" title="Z" kind="gray" left={['F']} right={['V']} leftW="w-[11px]" midW="w-[19px]" />
          <Node pos="left-[547px] top-[387px] w-[47px] h-[47px]" title="Series" kind="gray" left={['S', 'N', 'C']} right={['S']} leftW="w-[14px]" midW="w-[17px]" />
          <Node pos="left-[649px] top-[385px] w-[47px] h-[33px]" title="A×B" left={['A', 'B']} right={['R']} midW="w-[17px]" />
          <Node pos="left-[752px] top-[346px] w-[47px] h-[62px]" title="Rectangle" left={['P', 'X', 'Y', 'R']} right={['R', 'L']} midW="w-[17px]" />
          <Node pos="left-[826px] top-[178px] w-[47px] h-[33px]" title="BBX" left={['A', 'B']} right={['C', 'P']} midW="w-[18px]" />
          <Node pos="left-[915px] top-[236px] w-[46px] h-[43px]" title="Flatten" left={['T', 'P']} right={['T']} midW="w-[17px]" />
          <Node pos="left-[967px] top-[269px] w-[47px] h-[32px]" title="Cls" left={['C']} right={['C', 'P']} midW="w-[17px]" />
          <Node pos="left-[1027px] top-[226px] w-[45px] h-[33px]" title="Cull" left={['L', 'P']} right={['L']} midW="w-[16px]" />
          <Node pos="left-[1211px] top-[279px] w-[47px] h-[47px]" title="Series" kind="gray" left={['S', 'N', 'C']} right={['S']} leftW="w-[14px]" midW="w-[17px]" />
          <Node pos="left-[1279px] top-[271px] w-[46px] h-[21px]" title="X" kind="gray" left={['F']} right={['V']} leftW="w-[11px]" midW="w-[19px]" />
          <Node pos="left-[1346px] top-[257px] w-[48px] h-[37px]" title="Move" left={['G', 'T']} right={['G', 'X']} leftW="w-[14px]" midW="w-[17px]" />
          <Radial />
        </div>
        {/* BOTTOM WIDGET */}
        <div className="absolute left-[-2px] bottom-0 w-[121px] h-[28px] border-2 border-[#111] border-b-0 bg-linear-to-b from-[#e4e4e4] to-[#9a9a9a] flex items-center pl-[2px]">
          <Sq cls="bg-linear-to-b from-[#ffe766] to-[#f6b400] border-[#8a7a30]"><Wave /></Sq>
          <div className="relative ml-[6px] w-[23px] h-[24px]">
            <span className="text-[26px] leading-[24px] italic font-['Liberation_Serif',serif] text-[#222]">fx</span>
            <span className="absolute right-[-2px] top-[2px] w-[6px] h-[6px] border border-[#333] bg-white" />
          </div>
          <svg className="ml-[6px]" width="20" height="22" viewBox="0 0 20 22">
            <rect x="0" y="8" width="20" height="6" fill="#111" />
            <path d="M3 11h2M8 11h4M15 11h2" stroke="#fff" strokeWidth="2.500" />
            <text x="10" y="7" fontSize="7" textAnchor="middle" fill="#222" fontFamily="Liberation Sans, sans-serif">0.0</text>
            <text x="10" y="21" fontSize="7" textAnchor="middle" fill="#222" fontFamily="Liberation Sans, sans-serif">1.0</text>
          </svg>
          <div className="ml-[6px]"><Sq cls="bg-linear-to-b from-[#dcdcdc] to-[#8e8e8e]"><Download /></Sq></div>
        </div>
      </div>
      {/* STATUS */}
      <div className="h-[24px] flex items-center justify-between border-t-2 border-white bg-[#f0f0f0] pl-[4px] pr-[37px] pt-[1px] text-[11.400px] text-[#12224e]">
        <div className="flex items-center gap-[4px]">
          <div className="w-[15px] h-[15px] rounded-full bg-[#1c4fb0] border border-[#0b2b70] flex items-center justify-center">
            <span className="w-[5px] h-[10px] rounded-full border border-white" />
          </div>
          <span>Save As successfully completed... (100 seconds ago)</span>
        </div>
        <span className="text-[#776f86]">1.0.0007</span>
      </div>
      <Taskbar />
    </div>
  )
}

export default App
